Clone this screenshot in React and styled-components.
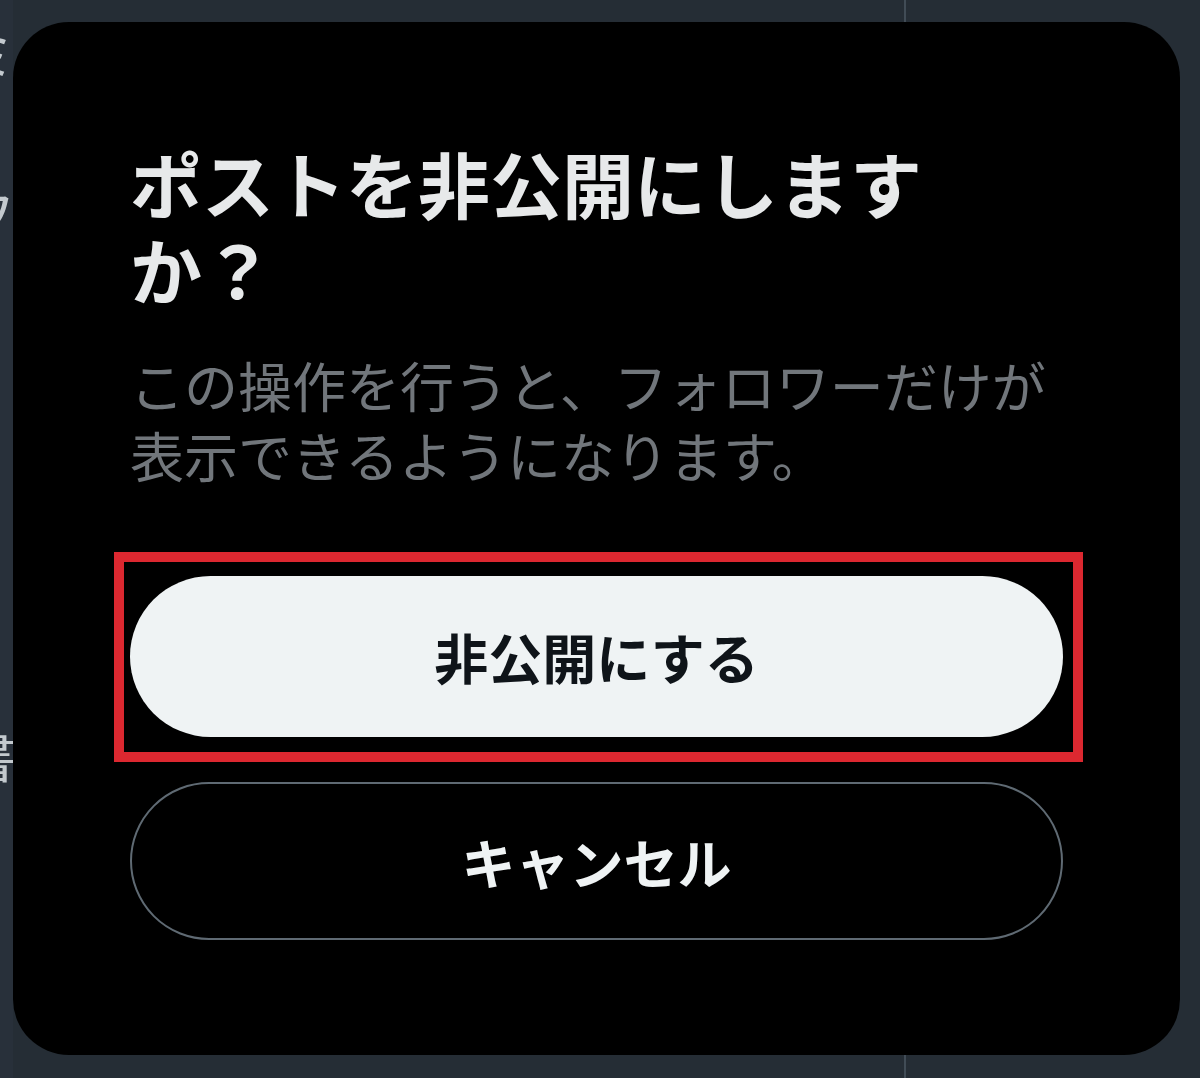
import React from "react";
import styled, { createGlobalStyle } from "styled-components";

const GlobalStyle = createGlobalStyle`
  body {
    margin: 0;
    background: #252d35;
    font-family: "Noto Sans CJK JP", "Noto Sans", sans-serif;
  }
`;

const Screen = styled.div`
  position: relative;
  width: 1200px;
  height: 1078px;
  overflow: hidden;
  background: #252d35;
  display: flex;
`;

const Edge = styled.div`
  width: 13px;
  flex-shrink: 0;
  overflow: hidden;
  display: flex;
  flex-direction: column;
  background: #28303a;
`;

const EdgeGlyph = styled.span`
  display: block;
  margin-top: ${props => props.offset}px;
  margin-left: -38px;
  font-size: 54px;
  line-height: 54px;
  color: #c3c9ce;
  white-space: nowrap;
`;

const Timeline = styled.div`
  width: 891px;
  flex-shrink: 0;
  border-right: 2px solid #414c56;
`;

const Dialog = styled.div`
  position: absolute;
  left: 13px;
  top: 22px;
  width: 1167px;
  box-sizing: border-box;
  padding: 117px 117px 115px;
  background: #000;
  border-radius: 56px;
  display: flex;
  flex-direction: column;
`;

const Title = styled.h1`
  margin: 0;
  font-size: 72px;
  line-height: 86px;
  font-weight: 700;
  color: #e7e9ea;
`;

const Body = styled.p`
  margin: 39px 0 0;
  font-size: 54px;
  line-height: 70px;
  font-weight: 400;
  color: #71767b;
`;

const Actions = styled.div`
  margin-top: 62px;
  display: flex;
  flex-direction: column;
  gap: 20px;
`;

const Highlight = styled.div`
  margin: 0 -20px 0 -16px;
  padding: 14px 10px 15px 6px;
  border: 10px solid #dc2830;
`;

const Button = styled.button`
  display: flex;
  align-items: center;
  justify-content: center;
  width: 100%;
  height: ${props => props.h}px;
  box-sizing: border-box;
  border-radius: 9999px;
  font-family: inherit;
  font-size: 54px;
  font-weight: 700;
  cursor: pointer;
  background: ${props => (props.primary ? "#eff3f4" : "transparent")};
  color: ${props => (props.primary ? "#0f1419" : "#eff3f4")};
  border: ${props => (props.primary ? "none" : "2px solid #5f6a73")};
`;

export default function App() {
  return (
    <>
      <GlobalStyle />
      <Screen>
        <Edge>
          <EdgeGlyph offset={25}>ミ</EdgeGlyph>
          <EdgeGlyph offset={106}>フ</EdgeGlyph>
          <EdgeGlyph offset={489}>書</EdgeGlyph>
        </Edge>
        <Timeline />
        <Dialog>
          <Title>ポストを非公開にしますか？</Title>
          <Body>この操作を行うと、フォロワーだけが表示できるようになります。</Body>
          <Actions>
            <Highlight>
              <Button primary h={161}>非公開にする</Button>
            </Highlight>
            <Button h={158}>キャンセル</Button>
          </Actions>
        </Dialog>
      </Screen>
    </>
  );
}
